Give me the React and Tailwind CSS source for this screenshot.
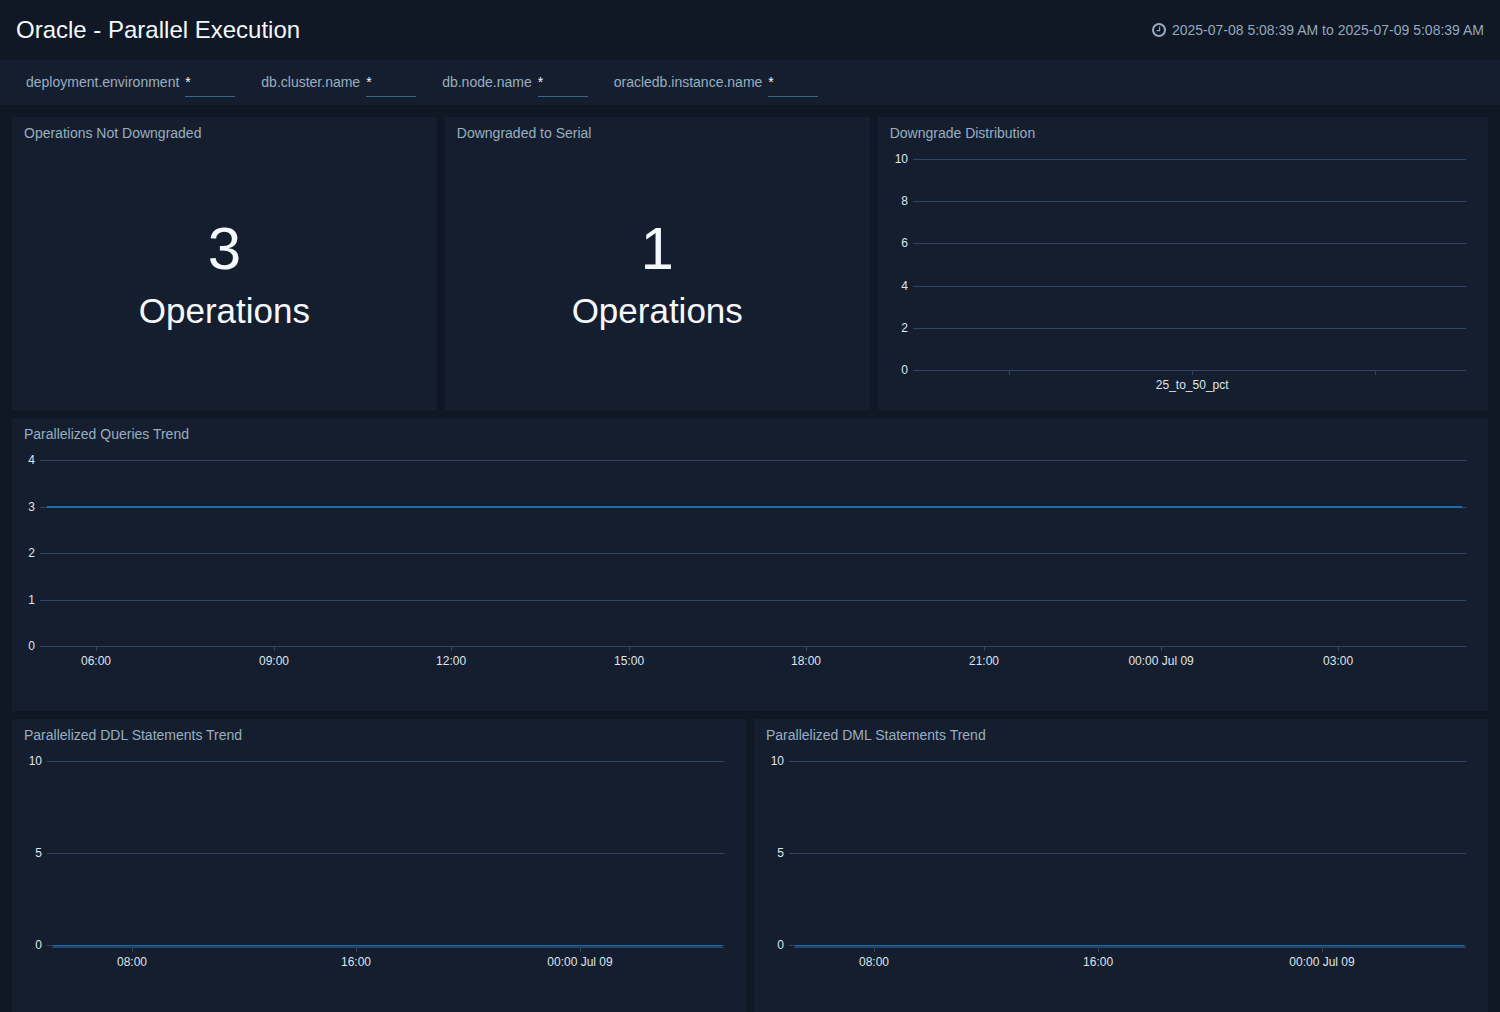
const filters = [
  "deployment.environment",
  "db.cluster.name",
  "db.node.name",
  "oracledb.instance.name",
];

// y values are pixels from the top gridline, x values are percent of the plot width
const distribution = {
  height: 211,
  yTicks: [
    { label: "10", y: 0 },
    { label: "8", y: 42 },
    { label: "6", y: 84 },
    { label: "4", y: 127 },
    { label: "2", y: 169 },
    { label: "0", y: 211 },
  ],
  xTicks: [
    { label: "", x: 17.37 },
    { label: "25_to_50_pct", x: 50.46 },
    { label: "", x: 83.55 },
  ],
};

const queriesTrend = {
  height: 186,
  yTicks: [
    { label: "4", y: 0 },
    { label: "3", y: 47 },
    { label: "2", y: 93 },
    { label: "1", y: 140 },
    { label: "0", y: 186 },
  ],
  xTicks: [
    { label: "06:00", x: 3.93 },
    { label: "09:00", x: 16.41 },
    { label: "12:00", x: 28.83 },
    { label: "15:00", x: 41.31 },
    { label: "18:00", x: 53.72 },
    { label: "21:00", x: 66.2 },
    { label: "00:00 Jul 09", x: 78.62 },
    { label: "03:00", x: 91.03 },
  ],
  series: { y: 46, from: 0.5, to: 99.72 },
};

const statementsTrend = {
  height: 186,
  yTicks: [
    { label: "10", y: 0 },
    { label: "5", y: 92 },
    { label: "0", y: 184 },
  ],
  xTicks: [
    { label: "08:00", x: 12.56 },
    { label: "16:00", x: 45.65 },
    { label: "00:00 Jul 09", x: 78.73 },
  ],
  series: { y: 184, from: 0.9, to: 99.7, faded: true },
  axisFrom: 0.8,
};

function ClockIcon({ className }) {
  return (
    <svg viewBox="0 128 1536 1536" fill="currentColor" className={className} aria-hidden="true">
      <path d="M896 544v448q0 14-9 23t-23 9h-320q-14 0-23-9t-9-23v-64q0-14 9-23t23-9h224v-352q0-14 9-23t23-9h64q14 0 23 9t9 23zm416 352q0-148-73-273t-198-198-273-73-273 73-198 198-73 273 73 273 198 198 273 73 273-73 198-198 73-273zm224 0q0 209-103 385.5t-279.5 279.5-385.5 103-385.5-103-279.5-279.5-103-385.5 103-385.5 279.5-279.5 385.5-103 385.5 103 279.5 279.5 103 385.5z" />
    </svg>
  );
}

function Panel({ title, className, children }) {
  return (
    <section className={`flex h-[293px] flex-col bg-[#151e2f] px-3 pt-1.5 ${className}`}>
      <h2 className="text-sm leading-5 text-[#98afc0]">{title}</h2>
      {children}
    </section>
  );
}

function Stat({ value, unit }) {
  return (
    <div className="flex flex-1 flex-col items-center pt-[72px] text-[#f5f9fe]">
      <div className="text-[60px] leading-[68px]">{value}</div>
      <div className="mt-2 text-[35px] leading-[40px]">{unit}</div>
    </div>
  );
}

function Chart({ data, wideLabels }) {
  const { height, yTicks, xTicks, series, axisFrom } = data;

  return (
    <div className={`mt-4 pr-2.5 ${wideLabels ? "pl-[23px]" : "pl-4"}`}>
      <svg
        width="100%"
        height={height + 24}
        className="block overflow-visible fill-[#dfe5ec] text-xs"
        shapeRendering="crispEdges"
      >
        {yTicks.map((tick) => (
          <g key={tick.label}>
            <rect x="0" y={tick.y} width="100%" height="1" className="fill-[#2f4468]" />
            <text x="-5" y={tick.y + 4} textAnchor="end">
              {tick.label}
            </text>
          </g>
        ))}

        {axisFrom && (
          <rect
            x={`${axisFrom}%`}
            y={height}
            width={`${100 - axisFrom}%`}
            height="1"
            className="fill-[#2f4468]"
          />
        )}

        {xTicks.map((tick) => (
          <g key={tick.x}>
            <rect x={`${tick.x}%`} y={height + 1} width="1" height="4" className="fill-[#2f4468]" />
            <text x={`${tick.x}%`} y={height + 19} textAnchor="middle">
              {tick.label}
            </text>
          </g>
        ))}

        {series && (
          <>
            <rect
              x={`${series.from}%`}
              y={series.y}
              width={`${series.to - series.from}%`}
              height="1"
              className="fill-[#1a6dab]"
            />
            <rect
              x={`${series.from}%`}
              y={series.y + 1}
              width={`${series.to - series.from}%`}
              height="1"
              className={series.faded ? "fill-[#1a4468]" : "fill-[#1f6ba4]"}
            />
          </>
        )}
      </svg>
    </div>
  );
}

export default function App() {
  return (
    <div className="min-h-screen bg-[#101725] font-['Liberation_Sans',Arial,sans-serif]">
      <header className="flex h-15 items-center justify-between px-4">
        <h1 className="text-2xl text-[#f5f9fe]">Oracle - Parallel Execution</h1>
        <div className="flex items-center gap-1.5 text-sm text-[#94a9be]">
          <ClockIcon className="size-3.5" />
          <span>2025-07-08 5:08:39 AM to 2025-07-09 5:08:39 AM</span>
        </div>
      </header>

      <div className="flex h-[45px] items-start gap-[26px] bg-[#151e2f] px-[26px] pt-2">
        {filters.map((name) => (
          <div key={name} className="flex gap-1.5 text-sm">
            <label htmlFor={name} className="leading-7 text-[#98afc0]">
              {name}
            </label>
            <input
              id={name}
              defaultValue="*"
              className="h-[29px] w-[50px] border-b border-[#35678a] text-[#f5f9fe] outline-none"
            />
          </div>
        ))}
      </div>

      <main className="grid grid-cols-24 gap-2 px-3 pt-3">
        <Panel title="Operations Not Downgraded" className="col-span-7">
          <Stat value="3" unit="Operations" />
        </Panel>
        <Panel title="Downgraded to Serial" className="col-span-7">
          <Stat value="1" unit="Operations" />
        </Panel>
        <Panel title="Downgrade Distribution" className="col-span-10">
          <Chart data={distribution} wideLabels />
        </Panel>
        <Panel title="Parallelized Queries Trend" className="col-span-24">
          <Chart data={queriesTrend} />
        </Panel>
        <Panel title="Parallelized DDL Statements Trend" className="col-span-12">
          <Chart data={statementsTrend} wideLabels />
        </Panel>
        <Panel title="Parallelized DML Statements Trend" className="col-span-12">
          <Chart data={statementsTrend} wideLabels />
        </Panel>
      </main>
    </div>
  );
}
